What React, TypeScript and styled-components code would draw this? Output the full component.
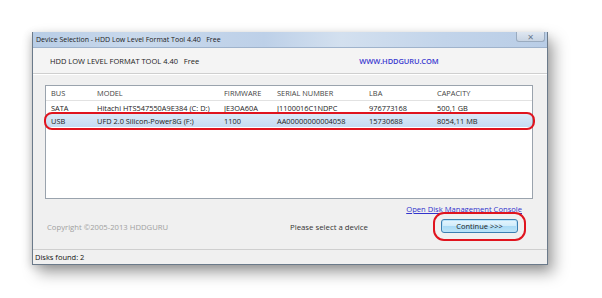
import * as React from 'react';
import styled, { createGlobalStyle } from 'styled-components';

const GlobalStyle = createGlobalStyle`
  html, body {
    margin: 0;
    padding: 0;
    background: #ffffff;
  }
  body {
    font-family: "Open Sans", "DejaVu Sans", sans-serif;
    color: #222;
  }
`;

// --- Layout ---

const Page = styled.div`
  width: 602px;
  height: 298px;
  padding: 32px 0 0 32px;
  box-sizing: border-box;
`;

const Window = styled.div`
  width: 516px;
  height: 233px;
  display: flex;
  flex-direction: column;
  background: #f0f0f0;
  border: 1px solid #6b7a8a;
  border-top: none;
  box-sizing: border-box;
  box-shadow: 6px 8px 14px rgba(0, 0, 0, 0.35), -2px 2px 8px rgba(0, 0, 0, 0.15);
`;

const TitleBar = styled.div`
  height: 15px;
  display: flex;
  align-items: center;
  padding-left: 3px;
  background: linear-gradient(90deg, #b8cde6 0%, #c9d9ec 20%, #bdd0e8 45%, #d3e0ef 60%, #c2d4ea 80%, #b9cde6 100%);
  border-bottom: 1px solid #9fb3cc;
  font-size: 7px;
  color: #1b1b1b;
  white-space: pre;
`;

const CloseButton = styled.div`
  margin-left: auto;
  margin-right: 2px;
  align-self: flex-start;
  width: 27px;
  height: 9px;
  display: flex;
  align-items: center;
  justify-content: center;
  background: linear-gradient(#dfe7f1, #c8d4e3);
  border: 1px solid #9aabbf;
  border-top: none;
  border-radius: 0 0 3px 3px;
  font-size: 8px;
  font-weight: bold;
  color: #6a7a90;
  line-height: 1;
`;

const Header = styled.div`
  height: 25px;
  display: flex;
  align-items: center;
  background: #f4f4f4;
  border-bottom: 1px solid #cfcfcf;
  box-shadow: 0 1px 0 #ffffff;
  font-size: 7.5px;
`;

const HeaderTitle = styled.span`
  margin-left: 17px;
  color: #222;
  white-space: pre;
`;

const HeaderLink = styled.span`
  margin-left: 160px;
  color: #3a3ad0;
  font-weight: 600;
  letter-spacing: -0.1px;
`;

const Content = styled.div`
  flex: 1;
  display: flex;
  flex-direction: column;
  padding: 11px 14px 0 12px;
`;

const ListBox = styled.div`
  height: 112px;
  background: #ffffff;
  border: 1px solid #9aa3ad;
  display: flex;
  flex-direction: column;
  font-size: 7.4px;
`;

const Row = styled.div<{ $selected?: boolean; $head?: boolean }>`
  position: relative;
  display: grid;
  grid-template-columns: 46px 127px 53px 92px 68px 1fr;
  align-items: center;
  height: ${p => (p.$head ? '14px' : '13px')};
  padding-left: 5px;
  border-bottom: ${p => (p.$head ? '1px solid #e2e2e2' : 'none')};
  color: ${p => (p.$head ? '#444' : '#222')};
  background: ${p => (p.$selected ? 'linear-gradient(#dce9f7, #c5dbf2)' : 'transparent')};
  white-space: nowrap;
`;

const RedRing = styled.div<{ $radius: number }>`
  position: absolute;
  border: 2px solid #e0141e;
  border-radius: ${p => p.$radius}px;
  pointer-events: none;
`;

const LinkLine = styled.div`
  display: flex;
  justify-content: flex-end;
  margin-top: 5px;
  padding-right: 11px;
`;

const ConsoleLink = styled.span`
  font-size: 7.6px;
  color: #3333cc;
  text-decoration: underline;
`;

const ActionRow = styled.div`
  display: flex;
  align-items: center;
  margin-top: 4px;
  height: 16px;
`;

const Copyright = styled.span`
  margin-left: 2px;
  margin-top: 2px;
  font-size: 7.7px;
  color: #a0a0a0;
  width: 243px;
`;

const Hint = styled.span`
  margin-top: 2px;
  font-size: 7.8px;
  color: #333;
  width: 151px;
`;

const ButtonWrap = styled.div`
  position: relative;
`;

const Button = styled.div`
  width: 75px;
  height: 12px;
  display: flex;
  align-items: center;
  justify-content: center;
  background: linear-gradient(#e6f5fd 0%, #d0ecfb 50%, #a9daf5 51%, #bde5f8 100%);
  border: 1px solid #3c7fb1;
  border-radius: 3px;
  box-shadow: inset 0 0 0 1px #b8e2fa;
  font-size: 7.5px;
  color: #222;
`;

const StatusBar = styled.div`
  margin-top: auto;
  height: 14px;
  display: flex;
  align-items: center;
  padding-left: 2px;
  border-top: 1px solid #cfcfcf;
  background: #f0f0f0;
  font-size: 7.5px;
  color: #111;
`;

type Disk = {
  bus: string;
  model: string;
  firmware: string;
  serial: string;
  lba: string;
  capacity: string;
  selected?: boolean;
};

const disks: Disk[] = [
  { bus: 'SATA', model: 'Hitachi HTS547550A9E384 (C: D:)', firmware: 'JE3OA60A', serial: 'J1100016C1NDPC', lba: '976773168', capacity: '500,1 GB' },
  { bus: 'USB', model: 'UFD 2.0 Silicon-Power8G (F:)', firmware: '1100', serial: 'AA00000000004058', lba: '15730688', capacity: '8054,11 MB', selected: true },
];

export default function App() {
  return (
    <>
      <GlobalStyle />
      <Page>
        <Window>
          <TitleBar>
            {'Device Selection - HDD Low Level Format Tool 4.40   Free'}
            <CloseButton>✕</CloseButton>
          </TitleBar>
          <Header>
            <HeaderTitle>{'HDD LOW LEVEL FORMAT TOOL 4.40   Free'}</HeaderTitle>
            <HeaderLink>WWW.HDDGURU.COM</HeaderLink>
          </Header>
          <Content>
            <ListBox>
              <Row $head>
                <span>BUS</span>
                <span>MODEL</span>
                <span>FIRMWARE</span>
                <span>SERIAL NUMBER</span>
                <span>LBA</span>
                <span>CAPACITY</span>
              </Row>
              {disks.map(d => (
                <Row key={d.bus} $selected={d.selected}>
                  <span>{d.bus}</span>
                  <span>{d.model}</span>
                  <span>{d.firmware}</span>
                  <span>{d.serial}</span>
                  <span>{d.lba}</span>
                  <span>{d.capacity}</span>
                  {d.selected && <RedRing $radius={8} style={{ left: -2, right: -3, top: -2, bottom: -3 }} />}
                </Row>
              ))}
            </ListBox>
            <LinkLine>
              <ConsoleLink>Open Disk Management Console</ConsoleLink>
            </LinkLine>
            <ActionRow>
              <Copyright>Copyright ©2005-2013 HDDGURU</Copyright>
              <Hint>Please select a device</Hint>
              <ButtonWrap>
                <Button>Continue &gt;&gt;&gt;</Button>
                <RedRing $radius={11} style={{ left: -8, right: -8, top: -7, bottom: -8 }} />
              </ButtonWrap>
            </ActionRow>
          </Content>
          <StatusBar>Disks found: 2</StatusBar>
        </Window>
      </Page>
    </>
  );
}
